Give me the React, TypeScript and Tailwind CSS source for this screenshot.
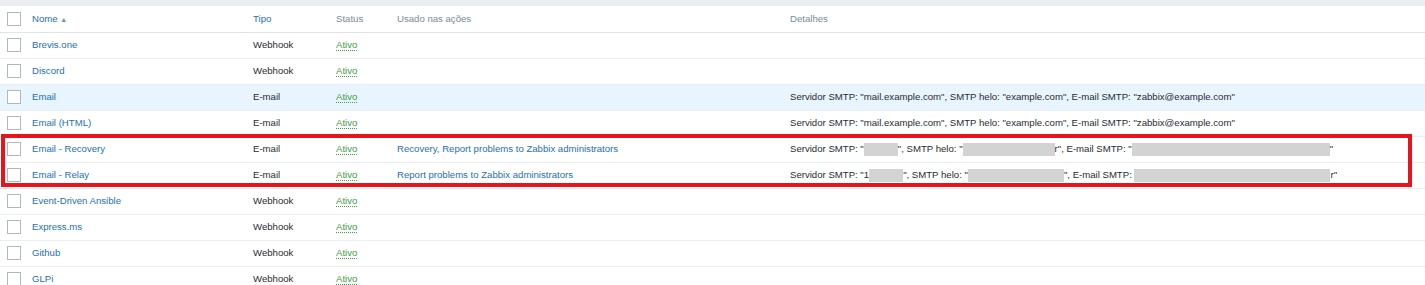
type Row = {
  name: string;
  type: string;
  actions?: string;
  details?: React.ReactNode;
  hover?: boolean;
};

const Blur = ({ w }: { w: number }) => (
  <span className="inline-block h-[13px] bg-[#d3d3d3] align-middle" style={{ width: w }} />
);

const example = 'Servidor SMTP: "mail.example.com", SMTP helo: "example.com", E-mail SMTP: "zabbix@example.com"';

const rows: Row[] = [
  { name: "Brevis.one", type: "Webhook" },
  { name: "Discord", type: "Webhook" },
  { name: "Email", type: "E-mail", details: example, hover: true },
  { name: "Email (HTML)", type: "E-mail", details: example },
  {
    name: "Email - Recovery",
    type: "E-mail",
    actions: "Recovery, Report problems to Zabbix administrators",
    details: (
      <>
        Servidor SMTP: "<Blur w={34} />", SMTP helo: "<Blur w={92} />r", E-mail SMTP: "<Blur w={198} />"
      </>
    ),
  },
  {
    name: "Email - Relay",
    type: "E-mail",
    actions: "Report problems to Zabbix administrators",
    details: (
      <>
        Servidor SMTP: "1<Blur w={34} />", SMTP helo: "<Blur w={96} />", E-mail SMTP: <Blur w={196} />r"
      </>
    ),
  },
  { name: "Event-Driven Ansible", type: "Webhook" },
  { name: "Express.ms", type: "Webhook" },
  { name: "Github", type: "Webhook" },
  { name: "GLPi", type: "Webhook" },
];

const Check = () => <span className="block h-[14px] w-[14px] border border-[#acbbc2] bg-white" />;

export default function App() {
  return (
    <div className="relative h-[285px] w-[1425px] overflow-hidden bg-white font-['Liberation_Sans',Arial,sans-serif] text-[9.6px] text-[#1f2c33]">
      <div className="h-[6px] bg-[#ebeef0]" />
      <table className="w-full table-fixed border-collapse">
        <colgroup>
          <col className="w-[32px]" />
          <col className="w-[221px]" />
          <col className="w-[83px]" />
          <col className="w-[61px]" />
          <col className="w-[393px]" />
          <col />
        </colgroup>
        <thead>
          <tr className="h-[26px] border-b border-[#dfe4e7] text-left">
            <th className="pl-[7px] font-normal"><Check /></th>
            <th className="font-normal text-[#1f6fb2]">
              Nome <span className="text-[7px] text-[#768d99]">▲</span>
            </th>
            <th className="font-normal text-[#1f6fb2]">Tipo</th>
            <th className="font-normal text-[#768d99]">Status</th>
            <th className="font-normal text-[#768d99]">Usado nas ações</th>
            <th className="font-normal text-[#768d99]">Detalhes</th>
          </tr>
        </thead>
        <tbody>
          {rows.map((r) => (
            <tr key={r.name} className={`h-[26px] border-b border-[#ebeef0] ${r.hover ? "bg-[#e8f5ff]" : ""}`}>
              <td className="pl-[7px]"><Check /></td>
              <td className="text-[#1f6fb2]">{r.name}</td>
              <td>{r.type}</td>
              <td>
                <span className="border-b border-dotted border-[#429e47] text-[#429e47]">Ativo</span>
              </td>
              <td className="text-[#1f6fb2]">{r.actions}</td>
              <td className="whitespace-nowrap">{r.details}</td>
            </tr>
          ))}
        </tbody>
      </table>
      {/* annotation box over the two email rows */}
      <div className="pointer-events-none absolute left-[1px] top-[134px] h-[53px] w-[1411px] border-[4px] border-[#e8141b]" />
    </div>
  );
}
